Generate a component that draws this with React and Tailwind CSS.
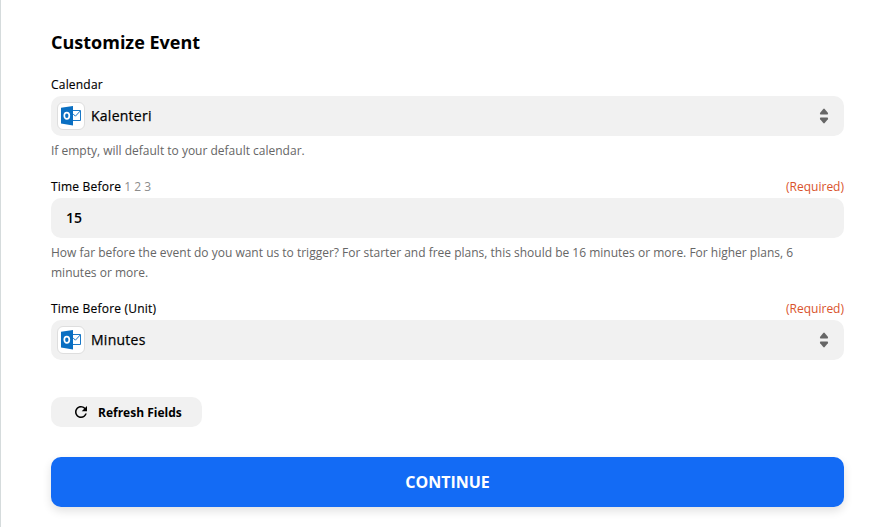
import { MdRefresh } from "react-icons/md";

const OutlookIcon = () => (
  <span className="flex h-7 w-7 shrink-0 items-center justify-center rounded-[6px] border border-[#dedede] bg-white">
    <svg width="20" height="20" viewBox="0 0 20 20" fill="none">
      <path d="M11.5 4.5h8v10h-8z" fill="#fff" stroke="#1a78c6" />
      <path d="M12 7.8l2.4 2.4 5-5.4" stroke="#1a78c6" />
      <path d="M0 1.8L12 0v19.6L0 17.6z" fill="#0a6fc2" />
      <ellipse cx="5.8" cy="9.8" rx="2.5" ry="3.1" stroke="#fff" strokeWidth="1.7" />
    </svg>
  </span>
);

const SortArrows = () => (
  <svg width="10" height="16" viewBox="0 0 10 16" fill="#666" className="shrink-0">
    <path d="M4.3.9Q5 .1 5.7.9L8.8 4.8Q9.6 6.5 8.4 6.5H1.6Q.4 6.5 1.2 4.8z" />
    <path d="M4.3 15.1Q5 15.9 5.7 15.1L8.8 11.2Q9.6 9.5 8.4 9.5H1.6Q.4 9.5 1.2 11.2z" />
  </svg>
);

function Field({ label, hint, required = false, help, children }) {
  return (
    <div className="mb-4">
      <div className="flex h-[21px] justify-between text-[12px] leading-5">
        <label className="font-medium tracking-[0.2px] text-black [-webkit-text-stroke:0.15px]">
          {label}
          {hint && (
            <span className="ml-[3px] font-normal tracking-normal text-[#8c8c8c] [-webkit-text-stroke:0]">
              {hint}
            </span>
          )}
        </label>
        {required && <span className="text-[#d9532c]">(Required)</span>}
      </div>
      {children}
      {help && (
        <p className="mt-[5px] pr-10 text-[12px] leading-5 text-[#666]">{help}</p>
      )}
    </div>
  );
}

function SelectBox({ value }) {
  return (
    <button className="flex h-10 w-full items-center rounded-[10px] bg-[#f1f1f1] pr-[15px] pl-1.5">
      <OutlookIcon />
      <span className="ml-1.5 flex-1 pb-0.5 text-left text-[14px] font-medium tracking-[0.25px] text-black [-webkit-text-stroke:0.25px]">
        {value}
      </span>
      <SortArrows />
    </button>
  );
}

export default function App() {
  return (
    <div className="h-[527px] overflow-hidden border-l border-[#d5dbdc] bg-white pr-[47px] pl-[50px] font-['Open_Sans',sans-serif]">
      <h2 className="mt-[30px] mb-[21px] text-[18px] leading-6 font-bold text-black">
        Customize Event
      </h2>

      <Field label="Calendar" help="If empty, will default to your default calendar.">
        <SelectBox value="Kalenteri" />
      </Field>

      <Field
        label="Time Before"
        hint="1 2 3"
        required
        help="How far before the event do you want us to trigger? For starter and free plans, this should be 16 minutes or more. For higher plans, 6 minutes or more."
      >
        <div className="flex h-10 items-center rounded-[10px] bg-[#f1f1f1] px-[15px] pb-0.5 text-[14px] font-semibold text-black">
          15
        </div>
      </Field>

      <Field label="Time Before (Unit)" required>
        <SelectBox value="Minutes" />
      </Field>

      <button className="mt-[37px] flex h-[30px] w-[151px] items-center rounded-[10px] bg-[#f1f1f1] pl-[21px] text-[12px] font-bold text-black">
        <MdRefresh className="mr-2 h-[18px] w-[18px]" />
        <span className="pt-0.5">Refresh Fields</span>
      </button>

      <button className="mt-[30px] flex h-[50px] w-full items-center justify-center rounded-[10px] bg-[#136bf5] text-[16px] font-bold text-white shadow-[0_4px_10px_rgba(0,0,0,0.12)]">
        CONTINUE
      </button>
    </div>
  );
}
